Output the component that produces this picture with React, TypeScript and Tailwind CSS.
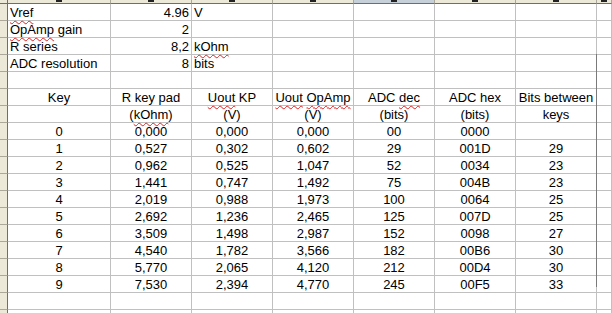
import type { ReactNode } from "react";

const cols = ["A", "B", "C", "D", "E", "F", "G", "H"];
const grid =
  "grid grid-cols-[8px_103px_81px_81px_81px_81px_81px_81px_1fr]";

const rows: string[][] = [
  ["0", "0,000", "0,000", "0,000", "00", "0000", ""],
  ["1", "0,527", "0,302", "0,602", "29", "001D", "29"],
  ["2", "0,962", "0,525", "1,047", "52", "0034", "23"],
  ["3", "1,441", "0,747", "1,492", "75", "004B", "23"],
  ["4", "2,019", "0,988", "1,973", "100", "0064", "25"],
  ["5", "2,692", "1,236", "2,465", "125", "007D", "25"],
  ["6", "3,509", "1,498", "2,987", "152", "0098", "27"],
  ["7", "4,540", "1,782", "3,566", "182", "00B6", "30"],
  ["8", "5,770", "2,065", "4,120", "212", "00D4", "30"],
  ["9", "7,530", "2,394", "4,770", "245", "00F5", "33"],
];

function Sq({ children }: { children: ReactNode }) {
  return (
    <span className="underline decoration-wavy decoration-[#e02020] decoration-1 underline-offset-[3px]">
      {children}
    </span>
  );
}

function Cell({
  children,
  align = "center",
}: {
  children?: ReactNode;
  align?: "left" | "right" | "center";
}) {
  const a =
    align === "left" ? "text-left" : align === "right" ? "text-right" : "text-center";
  return (
    <div
      className={`h-[17px] border-r border-b border-[#c0c0c0] px-[2px] leading-[18px] whitespace-nowrap ${a}`}
    >
      {children}
    </div>
  );
}

function Row({ children }: { children: ReactNode }) {
  return (
    <div className={grid}>
      <div className="h-[17px] bg-[#ece9d8] border-r border-b border-r-[#716f64] border-b-[#aca899]" />
      {children}
    </div>
  );
}

export default function App() {
  return (
    <div className="relative w-[612px] h-[313px] overflow-hidden bg-white text-[13px] text-black font-['Liberation_Sans',Arial,sans-serif]">
      {/* column header strip, only its bottom edge is visible */}
      <div className={grid}>
        <div className="h-[4px] bg-[#ece9d8] border-r border-b border-r-[#716f64] border-b-[#716f64]" />
        {cols.map((c) => (
          <div
            key={c}
            className={`flex h-[4px] justify-center border-r border-b border-r-[#aca899] border-b-[#716f64] ${
              c === "E" ? "bg-[#c5d0d9]" : "bg-[#ece9d8]"
            }`}
          >
            <div className="h-[2px] w-[6px] bg-[#222]" />
          </div>
        ))}
      </div>

      <Row>
        <Cell align="left"><Sq>Vref</Sq></Cell>
        <Cell align="right">4.96</Cell>
        <Cell align="left">V</Cell>
        <Cell /><Cell /><Cell /><Cell /><Cell />
      </Row>
      <Row>
        <Cell align="left"><Sq>OpAmp</Sq> gain</Cell>
        <Cell align="right">2</Cell>
        <Cell /><Cell /><Cell /><Cell /><Cell /><Cell />
      </Row>
      <Row>
        <Cell align="left">R series</Cell>
        <Cell align="right">8,2</Cell>
        <Cell align="left"><Sq>kOhm</Sq></Cell>
        <Cell /><Cell /><Cell /><Cell /><Cell />
      </Row>
      <Row>
        <Cell align="left">ADC resolution</Cell>
        <Cell align="right">8</Cell>
        <Cell align="left">bits</Cell>
        <Cell /><Cell /><Cell /><Cell /><Cell />
      </Row>
      <Row>
        <Cell /><Cell /><Cell /><Cell /><Cell /><Cell /><Cell /><Cell />
      </Row>
      <Row>
        <Cell>Key</Cell>
        <Cell>R key pad</Cell>
        <Cell><Sq>Uout</Sq> KP</Cell>
        <Cell><Sq>Uout</Sq> <Sq>OpAmp</Sq></Cell>
        <Cell>ADC <Sq>dec</Sq></Cell>
        <Cell>ADC hex</Cell>
        <Cell>Bits between</Cell>
        <Cell />
      </Row>
      <Row>
        <Cell />
        <Cell>(<Sq>kOhm</Sq>)</Cell>
        <Cell>(V)</Cell>
        <Cell>(V)</Cell>
        <Cell>(bits)</Cell>
        <Cell>(bits)</Cell>
        <Cell>keys</Cell>
        <Cell />
      </Row>
      {rows.map((r) => (
        <Row key={r[0]}>
          {r.map((v, i) => (
            <Cell key={i}>{v}</Cell>
          ))}
          <Cell />
        </Row>
      ))}
      <Row>
        <Cell /><Cell /><Cell /><Cell /><Cell /><Cell /><Cell /><Cell />
      </Row>
      <Row>
        <Cell /><Cell /><Cell /><Cell /><Cell /><Cell /><Cell /><Cell />
      </Row>

      {/* page break marker */}
      <div className="absolute left-[596px] top-[54px] h-[233px] w-px bg-[#7a7a7a]" />
    </div>
  );
}
